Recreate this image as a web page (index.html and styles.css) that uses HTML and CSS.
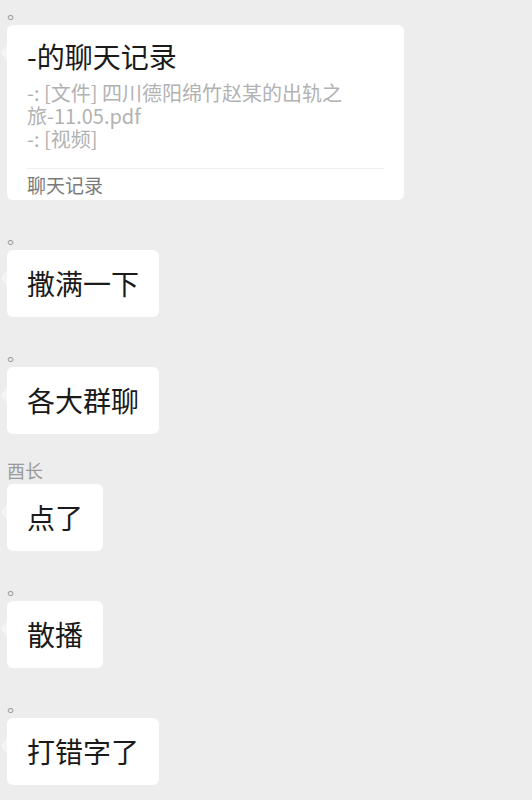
FILE: index.html
```html
<!DOCTYPE html>
<html>

<head>
    <title>聊天</title>
    <link rel="stylesheet" href="styles.css">
</head>

<body>
    <div class="chat">
        <div class="msg">
            <div class="name">。</div>
            <div class="bubble card">
                <div class="cardTitle">-的聊天记录</div>
                <div class="cardLines">
                    -: [文件] 四川德阳绵竹赵某的出轨之<br />
                    旅-11.05.pdf<br />
                    -: [视频]
                </div>
                <div class="cardFoot">聊天记录</div>
            </div>
        </div>
        <div class="msg">
            <div class="name">。</div>
            <div class="bubble">撒满一下</div>
        </div>
        <div class="msg">
            <div class="name">。</div>
            <div class="bubble">各大群聊</div>
        </div>
        <div class="msg">
            <div class="name">酉长</div>
            <div class="bubble">点了</div>
        </div>
        <div class="msg">
            <div class="name">。</div>
            <div class="bubble">散播</div>
        </div>
        <div class="msg">
            <div class="name">。</div>
            <div class="bubble">打错字了</div>
        </div>
    </div>
</body>

</html>
```

FILE: styles.css
```css
* {
    padding: 0;
    margin: 0;
    box-sizing: border-box;
}

body {
    background: #ededed;
    font-family: "Noto Sans CJK SC", "Noto Sans", sans-serif;
    color: #1a1a1a;
}

.chat {
    display: flex;
    flex-direction: column;
    align-items: flex-start;
    gap: 25px;
    padding-left: 7px;
}

.msg {
    display: flex;
    flex-direction: column;
    align-items: flex-start;
}

.name {
    font-size: 18px;
    line-height: 22px;
    height: 22px;
    margin-bottom: 3px;
    color: #9a9a9a;
}

.bubble {
    position: relative;
    background: #fff;
    border-radius: 6px;
    font-size: 28px;
    line-height: 39px;
    padding: 14px 20px;
}

.bubble::before {
    content: "";
    position: absolute;
    left: -6px;
    top: 20px;
    border-top: 8px solid transparent;
    border-bottom: 8px solid transparent;
    border-right: 6px solid rgba(255, 255, 255, 0.45);
}

.card {
    width: 397px;
    padding: 7px 20px 3px;
}

.cardTitle {
    font-size: 28px;
    line-height: 49px;
}

.cardLines {
    font-size: 20px;
    line-height: 23px;
    color: #b2b2b2;
    padding-bottom: 18px;
    border-bottom: 1px solid #efefef;
}

.cardFoot {
    font-size: 19px;
    line-height: 25px;
    padding-top: 3px;
    color: #7a7a7a;
}
```
